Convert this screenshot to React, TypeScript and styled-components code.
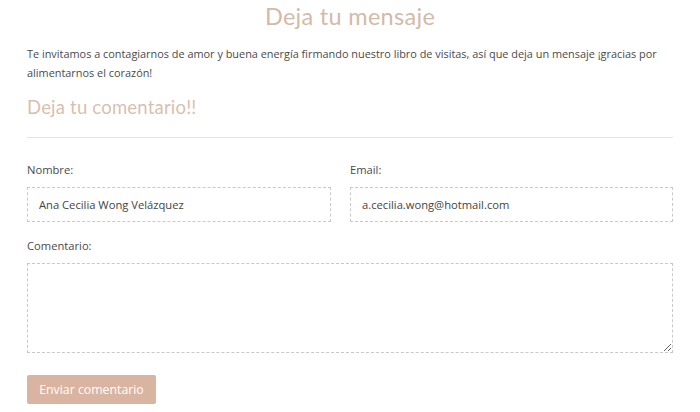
import React from "react";
import styled, { createGlobalStyle } from "styled-components";

const Global = createGlobalStyle`
  html, body { margin: 0; padding: 0; background: #fff; }
  * { box-sizing: border-box; }
`;

const Page = styled.div`
  width: 700px;
  padding: 0 27px;
  font-family: "Open Sans", "Liberation Sans", sans-serif;
  color: #555;
`;

const Title = styled.h1`
  margin: 0;
  padding-top: 2px;
  text-align: center;
  font-family: "Lato", "Noto Sans", sans-serif;
  font-weight: 400;
  font-size: 23.5px;
  line-height: 28px;
  letter-spacing: 0.3px;
  color: #d3baa8;
`;

const Intro = styled.p`
  margin: 14px 0 0;
  font-size: 10.9px;
  line-height: 19px;
  color: #4a4a4a;
`;

const SubTitle = styled.h2`
  margin: 13px 0 0;
  font-family: "Lato", "Noto Sans", sans-serif;
  font-weight: 400;
  font-size: 18.5px;
  line-height: 24px;
  letter-spacing: 0.2px;
  color: #d9bfae;
`;

const Rule = styled.hr`
  margin: 18px 0 0;
  border: 0;
  border-top: 1px solid #e4e4e4;
`;

const Form = styled.form`
  display: grid;
  grid-template-columns: 1fr 1fr;
  padding-top: 24px;
`;

const Field = styled.div<{ $full?: boolean; $first?: boolean }>`
  display: flex;
  flex-direction: column;
  grid-column: ${(p) => (p.$full ? "1 / -1" : "auto")};
  padding-right: ${(p) => (p.$first ? "19px" : "0")};
  margin-bottom: 16px;
`;

const Label = styled.label`
  font-size: 11.2px;
  line-height: 16px;
  color: #4a4a4a;
  margin-bottom: 9px;
`;

const Input = styled.input`
  height: 35px;
  border: 1px dashed #c9c9c9;
  padding: 0 11px;
  font-family: "Open Sans", "Liberation Sans", sans-serif;
  font-size: 11.2px;
  color: #444;
  background: #fff;
  outline: none;
`;

const TextArea = styled.textarea`
  height: 90px;
  border: 1px dashed #c9c9c9;
  padding: 8px 11px;
  font-family: "Open Sans", "Liberation Sans", sans-serif;
  font-size: 11.2px;
  color: #444;
  background: #fff;
  outline: none;
  resize: vertical;
`;

const Button = styled.button`
  grid-column: 1 / -1;
  justify-self: start;
  margin-top: 6px;
  height: 29px;
  width: 129px;
  border: 0;
  border-radius: 2px;
  background: #d9b4a0;
  color: #fff;
  font-family: "Open Sans", "Liberation Sans", sans-serif;
  font-size: 12.3px;
  cursor: pointer;
`;

export default function App() {
  return (
    <Page>
      <Global />
      <Title>Deja tu mensaje</Title>
      <Intro>
        Te invitamos a contagiarnos de amor y buena energía firmando nuestro libro de visitas, así que deja un mensaje
        ¡gracias por alimentarnos el corazón!
      </Intro>
      <SubTitle>Deja tu comentario!!</SubTitle>
      <Rule />
      <Form onSubmit={(e) => e.preventDefault()}>
        <Field $first>
          <Label>Nombre:</Label>
          <Input defaultValue="Ana Cecilia Wong Velázquez" />
        </Field>
        <Field>
          <Label>Email:</Label>
          <Input defaultValue="a.cecilia.wong@hotmail.com" />
        </Field>
        <Field $full>
          <Label>Comentario:</Label>
          <TextArea />
        </Field>
        <Button type="submit">Enviar comentario</Button>
      </Form>
    </Page>
  );
}
